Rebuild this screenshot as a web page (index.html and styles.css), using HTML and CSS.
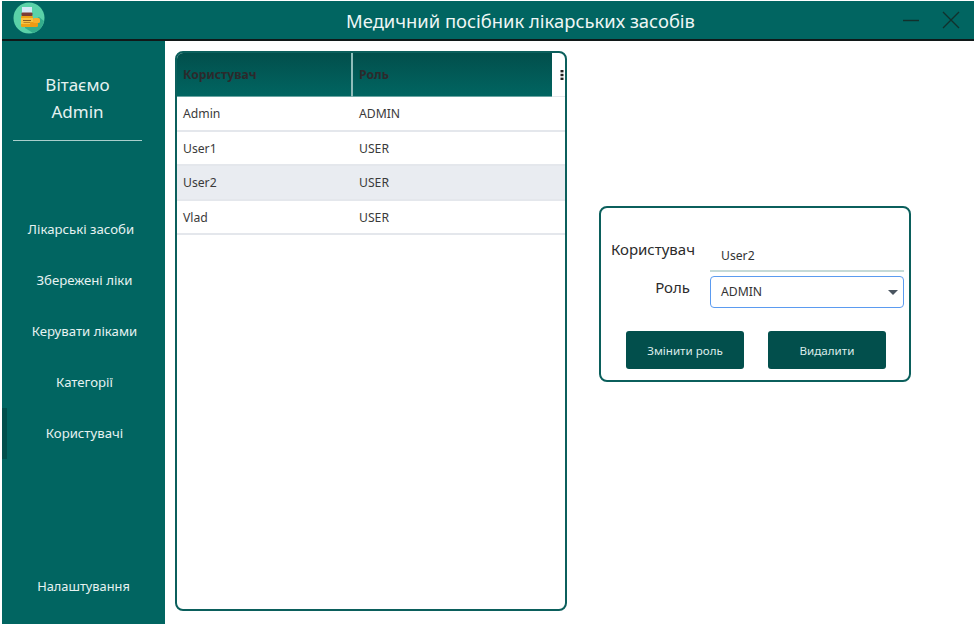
FILE: index.html
```html
<!DOCTYPE html>
<html>
<head>
    <title>Медичний посібник лікарських засобів</title>
    <link rel="stylesheet" href="styles.css">
</head>
<body>
    <!-- Title bar -->
    <header class="titlebar">
        <svg class="logo" width="32" height="32" viewBox="0 0 32 32">
            <circle cx="16" cy="16" r="15.5" fill="#5ad2a8"/>
            <path d="M12 26 L20 31 A15.5 15.5 0 0 0 31 19 L26 15 L12 24 Z" fill="#35ad8c"/>
            <rect x="9" y="5" width="10" height="6" fill="#d6e8f7"/>
            <rect x="8.5" y="10.5" width="11" height="3.5" rx="1" fill="#7a3b35"/>
            <rect x="8" y="14" width="12" height="11" rx="1" fill="#eda216"/>
            <rect x="8" y="16" width="12" height="6" fill="#f7c243"/>
            <rect x="10" y="18" width="8" height="1" fill="#8a5a20"/>
            <rect x="10.5" y="20" width="7" height="1" fill="#b5822a"/>
            <rect x="17" y="20" width="8" height="5" rx="1.5" fill="#f09a14"/>
            <rect x="20" y="16" width="7" height="5" rx="1.5" fill="#f9ae2b"/>
        </svg>
        <h1 class="app-title">Медичний посібник лікарських засобів</h1>
        <div class="window-buttons">
            <svg width="18" height="18" viewBox="0 0 18 18"><path d="M1 9.5 H17" stroke="#12302c" stroke-width="1.4"/></svg>
            <svg width="18" height="18" viewBox="0 0 18 18"><path d="M1 1 L17 17 M17 1 L1 17" stroke="#12302c" stroke-width="1.3"/></svg>
        </div>
    </header>

    <div class="layout">
        <!-- Side menu -->
        <nav class="sidebar">
            <div class="welcome">Вітаємо<br>Admin</div>
            <div class="menu">
                <a class="menu-item shift">Лікарські засоби</a>
                <a class="menu-item">Збережені ліки</a>
                <a class="menu-item">Керувати ліками</a>
                <a class="menu-item">Категорії</a>
                <a class="menu-item active">Користувачі</a>
            </div>
            <a class="menu-item settings">Налаштування</a>
        </nav>

        <main class="content">
            <!-- Users table -->
            <section class="table-card">
                <div class="table-head">
                    <div class="head-cell first">Користувач</div>
                    <div class="head-cell second">Роль</div>
                    <div class="head-menu">
                        <svg width="4" height="12" viewBox="0 0 4 12" fill="#222">
                            <rect x="0.5" y="1" width="3" height="2.4"/>
                            <rect x="0.5" y="4.8" width="3" height="2.4"/>
                            <rect x="0.5" y="8.6" width="3" height="2.4"/>
                        </svg>
                    </div>
                </div>
                <div class="row"><span class="cell-user">Admin</span><span>ADMIN</span></div>
                <div class="row"><span class="cell-user">User1</span><span>USER</span></div>
                <div class="row selected"><span class="cell-user">User2</span><span>USER</span></div>
                <div class="row"><span class="cell-user">Vlad</span><span>USER</span></div>
            </section>

            <!-- Edit form -->
            <section class="form-card">
                <div class="form-row">
                    <label class="form-label">Користувач</label>
                    <div class="text-field">User2</div>
                </div>
                <div class="form-row">
                    <label class="form-label role-label">Роль</label>
                    <div class="select-field">ADMIN<span class="caret"></span></div>
                </div>
                <div class="form-buttons">
                    <button class="action">Змінити роль</button>
                    <button class="action">Видалити</button>
                </div>
            </section>
        </main>
    </div>
</body>
</html>
```

FILE: styles.css
```css
/* Page */
body {
    margin: 0;
    height: 624px;
    overflow: hidden;
    background-color: #fff;
    font-family: "Noto Sans", "Open Sans", sans-serif;
    color: #333;
    display: flex;
    flex-direction: column;
}

/* Title bar */
.titlebar {
    height: 38px;
    flex-shrink: 0;
    margin: 1px 0 0 2px;
    padding: 0 14px 0 11px;
    background-color: #016561;
    border-bottom: 2px solid #101818;
    display: flex;
    align-items: center;
}

.logo {
    margin-top: -4px;
}

.app-title {
    flex: 1;
    margin: 0;
    padding-left: 94px;
    font-size: 18.4px;
    font-weight: normal;
    text-align: center;
    color: #eef6f5;
}

.window-buttons {
    display: flex;
    gap: 22px;
    align-items: center;
}

/* Layout under title bar */
.layout {
    flex: 1;
    display: flex;
}

/* Side menu */
.sidebar {
    width: 163px;
    margin-left: 2px;
    background-color: #016561;
    color: #e6f2f1;
    display: flex;
    flex-direction: column;
    box-sizing: border-box;
}

.welcome {
    margin: 30px 23px 0 11px;
    padding-bottom: 15px;
    border-bottom: 1px solid #a9cfcc;
    font-size: 17px;
    line-height: 27px;
    text-align: center;
}

.menu {
    margin-top: 63px;
    display: flex;
    flex-direction: column;
}

.menu-item {
    height: 51px;
    box-sizing: border-box;
    display: flex;
    align-items: center;
    justify-content: center;
    padding: 0 0 2px 2px;
    font-size: 13.2px;
    position: relative;
}

.menu-item.shift {
    padding: 0 5px 2px 0;
}

.menu-item.active::before {
    content: "";
    position: absolute;
    left: 0;
    top: 0;
    bottom: 0;
    width: 5px;
    background-color: #024f4c;
}

.settings {
    margin-top: auto;
    margin-bottom: 13px;
    padding: 0;
    font-size: 12.8px;
}

/* Main area */
.content {
    flex: 1;
    display: flex;
    align-items: flex-start;
    padding: 10px 0 0 10px;
    gap: 32px;
}

/* Users table */
.table-card {
    width: 392px;
    height: 560px;
    box-sizing: border-box;
    border: 2px solid #0b5f5c;
    border-radius: 8px;
    overflow: hidden;
    font-size: 12.2px;
}

.table-head {
    height: 44px;
    display: flex;
    font-weight: bold;
    color: #2c2a2c;
}

.head-cell {
    background: linear-gradient(#024f4c, #016561);
    display: flex;
    align-items: center;
    padding-left: 6px;
    box-sizing: border-box;
    border-bottom: 1px solid #6aa5a2;
}

.head-cell.first {
    width: 175px;
    border-right: 1px solid #8fbdba;
}

.head-cell.second {
    width: 200px;
    border-left: 1px solid #8fbdba;
}

.head-menu {
    flex: 1;
    display: flex;
    align-items: center;
    justify-content: flex-end;
    padding-right: 1px;
    border-bottom: 1px solid #e6e8ec;
}

.row {
    height: 34.6px;
    box-sizing: border-box;
    padding: 1px 0 0 6px;
    display: flex;
    align-items: center;
    border-bottom: 2px solid #e4e7ec;
    color: #3a3a3a;
}

.row.selected {
    background-color: #e9ecf1;
}

.cell-user {
    width: 176px;
}

/* Edit form */
.form-card {
    width: 312px;
    height: 176px;
    margin-top: 155px;
    box-sizing: border-box;
    border: 2px solid #0b5f5c;
    border-radius: 8px;
    padding: 27px 5px 0 0;
}

.form-row {
    display: flex;
    align-items: flex-start;
}

.form-label {
    width: 109px;
    padding-right: 15px;
    box-sizing: border-box;
    text-align: right;
    font-size: 15px;
    line-height: 28px;
    color: #2b2b2b;
    flex-shrink: 0;
}

.role-label {
    padding-right: 20px;
    margin-top: 1px;
}

.text-field {
    flex: 1;
    height: 37px;
    box-sizing: border-box;
    padding: 8px 0 0 11px;
    font-size: 12.2px;
    line-height: 26px;
    border-bottom: 2px solid #c5dad8;
}

.select-field {
    flex: 1;
    height: 32px;
    margin-top: 4px;
    box-sizing: border-box;
    padding-left: 10px;
    font-size: 12.2px;
    line-height: 30px;
    border: 1.5px solid #5b9bf0;
    border-radius: 4px;
    position: relative;
}

.caret {
    position: absolute;
    right: 5px;
    top: 13px;
    border-left: 5px solid transparent;
    border-right: 5px solid transparent;
    border-top: 5px solid #4a5560;
}

.form-buttons {
    display: flex;
    gap: 24px;
    margin: 23px 0 0 25px;
}

.action {
    width: 118px;
    height: 38px;
    padding: 0;
    background-color: #024f4c;
    color: #dcecea;
    border: none;
    border-radius: 3px;
    font-family: inherit;
    font-size: 11.6px;
}
```
